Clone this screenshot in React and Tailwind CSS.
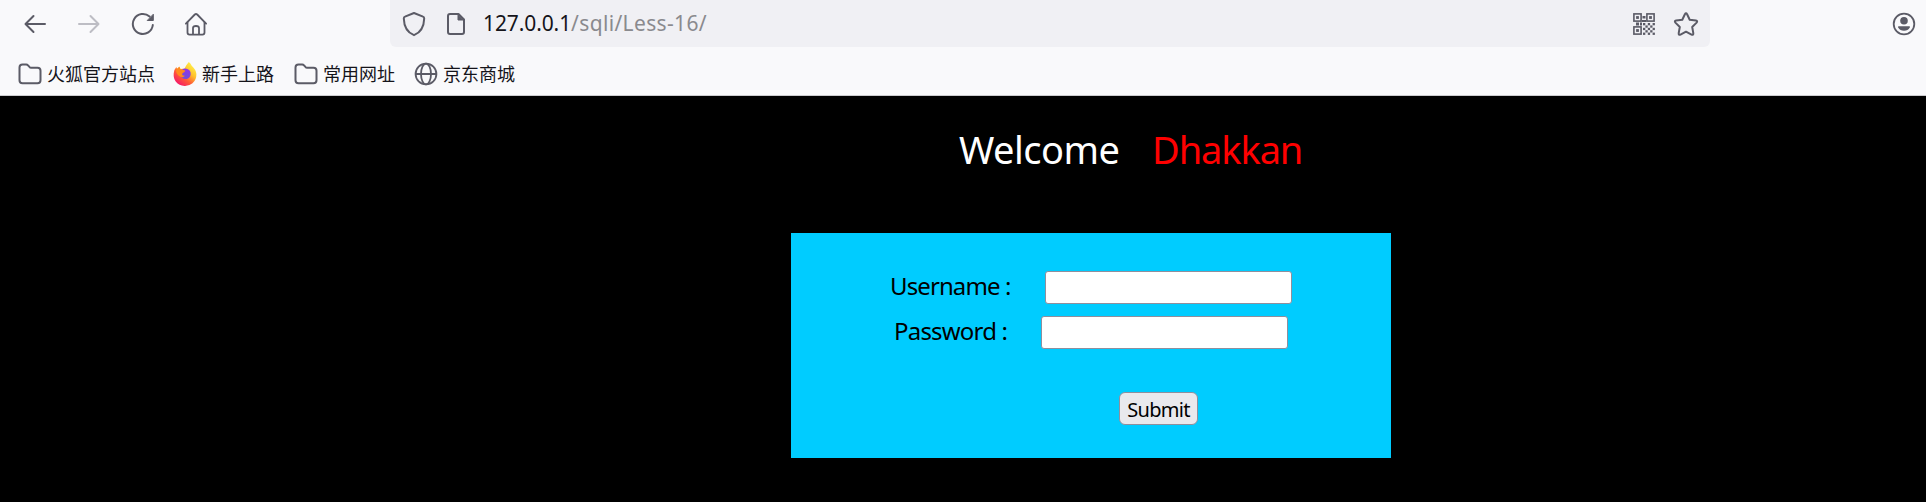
import React from "react";

const stroke = {
  fill: "none",
  stroke: "currentColor",
  strokeWidth: 2,
  strokeLinecap: "round",
  strokeLinejoin: "round",
};

function Back({ className }) {
  return (
    <svg className={className} width="24" height="24" viewBox="0 0 24 24" {...stroke}>
      <path d="M22 12H2.6M10.5 4L2.5 12l8 8" />
    </svg>
  );
}

function Reload() {
  return (
    <svg width="24" height="24" viewBox="0 0 24 24" {...stroke}>
      <path d="M21.8 13A10 10 0 1 1 18.6 4.6" />
      <path d="M22.3 2.6V8.5H16.6z" fill="currentColor" strokeWidth="1" />
    </svg>
  );
}

function Home() {
  return (
    <svg width="24" height="24" viewBox="0 0 24 24" {...stroke} strokeWidth="1.8">
      <path d="M1.9 11.7L10.8 2.5Q12 1.4 13.2 2.5L22.1 11.7" />
      <path d="M3.5 10.3V20.6Q3.5 22.6 5.5 22.6H18.5Q20.5 22.6 20.5 20.6V10.3" />
      <path d="M9 22V16Q9 14 12 14T15 16V22" />
    </svg>
  );
}

function Shield() {
  return (
    <svg width="24" height="26" viewBox="0 0 24 26" {...stroke}>
      <path d="M12 2L21 5.6Q22.2 6 22.2 7.4C22 15.5 19.5 21 12 24.2C4.5 21 2 15.5 1.8 7.4Q1.8 6 3 5.6Z" />
    </svg>
  );
}

function Page() {
  return (
    <svg width="20" height="24" viewBox="0 0 20 24" {...stroke}>
      <path d="M4 2H12.5L18 7.5V20Q18 22 16 22H4Q2 22 2 20V4Q2 2 4 2Z" />
      <path d="M12 2.5V8H17.5z" fill="currentColor" strokeWidth="1" />
    </svg>
  );
}

function Finder({ x, y }) {
  return (
    <g>
      <rect x={x + 0.9} y={y + 0.9} width="7.2" height="7.2" fill="none" stroke="currentColor" strokeWidth="1.6" />
      <rect x={x + 3.1} y={y + 3.1} width="2.8" height="2.8" />
    </g>
  );
}

const qrDots = [
  [0, 0], [2, 0], [4, 0], [1, 1], [3, 1], [0, 2], [2, 2], [4, 2], [1, 3], [3, 3], [0, 4], [2, 4], [4, 4],
];

function QrCode() {
  return (
    <svg width="22" height="22" viewBox="0 0 22 22" fill="currentColor">
      <Finder x={0} y={0} />
      <Finder x={13} y={0} />
      <Finder x={0} y={13} />
      <path d="M9.500 3h3v2.500h-3zM9 7h4v2H9zM3 9.500h3v3H3zM7 9.500h2v3H7z" />
      {qrDots.map(([c, r]) => (
        <rect key={`${c}-${r}`} x={10 + c * 2.4} y={10 + r * 2.4} width="2.3" height="2.3" />
      ))}
    </svg>
  );
}

function Star() {
  return (
    <svg width="26" height="26" viewBox="0 0 26 26" {...stroke}>
      <path d="M11.9 3.2Q13 1.3 14.1 3.2L16.7 8.7L22.9 9.5Q25 10 23.6 11.6L19.2 16L20.3 22.2Q20.4 24.4 18.5 23.6L13 20.7L7.5 23.6Q5.6 24.4 5.7 22.2L6.8 16L2.4 11.6Q1 10 3.1 9.5L9.3 8.7Z" />
    </svg>
  );
}

function Account() {
  return (
    <svg width="24" height="24" viewBox="0 0 24 24">
      <circle cx="12" cy="12" r="10.3" fill="none" stroke="currentColor" strokeWidth="1.8" />
      <circle cx="12" cy="8.8" r="3.8" fill="currentColor" />
      <path d="M6.8 14.2H17.2Q18.4 14.2 17.8 15.4Q16 18.7 12 18.7T6.2 15.4Q5.6 14.2 6.8 14.2Z" fill="currentColor" />
    </svg>
  );
}

function Folder() {
  return (
    <svg width="24" height="22" viewBox="0 0 24 22" {...stroke}>
      <path d="M4.5 1.5H8.2Q9.3 1.5 10 2.3L11.7 4.2Q12.2 4.7 13 4.7H19.5Q22.5 4.7 22.5 7.7V17.3Q22.5 20.3 19.5 20.3H4.5Q1.5 20.3 1.5 17.3V4.5Q1.5 1.5 4.5 1.5Z" />
    </svg>
  );
}

function Globe() {
  return (
    <svg width="24" height="24" viewBox="0 0 24 24" {...stroke} strokeWidth="1.8">
      <circle cx="12" cy="12" r="10.4" />
      <ellipse cx="12" cy="12" rx="5" ry="10.4" />
      <path d="M1.8 12H22.2" />
    </svg>
  );
}

function Firefox() {
  return (
    <svg width="24" height="26" viewBox="0 0 24 26">
      <defs>
        <linearGradient id="flame" x1="0.85" y1="0.1" x2="0.2" y2="0.95">
          <stop offset="0" stopColor="#fff14a" />
          <stop offset="0.35" stopColor="#ffc02c" />
          <stop offset="0.65" stopColor="#ff5a36" />
          <stop offset="1" stopColor="#f5156c" />
        </linearGradient>
        <linearGradient id="sphere" x1="0.7" y1="0" x2="0.3" y2="1">
          <stop offset="0" stopColor="#9334e8" />
          <stop offset="1" stopColor="#6b50d8" />
        </linearGradient>
      </defs>
      <path d="M15.8 1Q17.5 2 18.7 4.8Q22.9 8.5 23.4 13Q23.5 19 19.5 22.3Q16 25.2 11.5 25Q6 24.7 2.9 20.8Q0.3 17.5 0.7 12.5Q1 8.500 3.300 6L4.200 8L6.300 5.600L7.500 8L11.500 7.600Q13.500 3.500 15.800 1Z" fill="url(#flame)" />
      <path d="M8 11Q8.500 7.800 12.500 7.600Q16.500 8 17.600 11.500Q18.200 15.500 15 17.600Q11.500 19 8.800 16.500Q6.500 14 8 11Z" fill="url(#sphere)" />
      <path d="M3 9.500L4.300 7.600L6.300 6L7.500 8.300L12.300 9.400Q12 11.300 9.800 11.900L9 13.300Q9.500 15 12 14.800Q10.500 17 7.500 15.800Q3.500 14 3 9.500Z" fill="#ff8a1c" />
    </svg>
  );
}

function Bookmark({ icon, label, className }) {
  return (
    <a className={`flex items-center ${className}`}>
      <span className="flex h-[26px] w-6 items-center text-[#5b5b66]">{icon}</span>
      <span className="ml-[5px] text-[18px] leading-6 whitespace-nowrap text-[#15141a]">{label}</span>
    </a>
  );
}

function Browser() {
  return (
    <header className="h-24 border-b border-[#cccccf] bg-[#f9f9fb] text-[#5b5b66]">
      <div className="flex h-[47px] items-center">
        <nav className="flex w-[390px] items-center pl-[23px]">
          <Back />
          <Back className="ml-[30px] -scale-x-100 text-[#bdbdc4]" />
          <span className="ml-[30px]"><Reload /></span>
          <span className="ml-[29px]"><Home /></span>
        </nav>
        <div className="flex h-[47px] w-[1320px] items-center rounded-b-md bg-[#f0f0f4] pr-[11px] pl-3">
          <Shield />
          <span className="ml-5"><Page /></span>
          <span className="ml-[17px] flex-1 pb-0.5 text-[21px] leading-7 tracking-[0.35px] whitespace-nowrap text-[#8a8a8e]">
            <span className="tracking-[-0.1px] text-[#15141a]">127.0.0.1</span>/sqli/Less-16/
          </span>
          <QrCode />
          <span className="ml-[18px]"><Star /></span>
        </div>
        <span className="ml-[182px] pt-px"><Account /></span>
      </div>
      <div className="flex h-12 items-center pt-1.5 pl-[18px]">
        <Bookmark icon={<Folder />} label="火狐官方站点" className="w-[155px]" />
        <Bookmark icon={<Firefox />} label="新手上路" className="w-[121px]" />
        <Bookmark icon={<Folder />} label="常用网址" className="w-[120px]" />
        <Bookmark icon={<Globe />} label="京东商城" className="" />
      </div>
    </header>
  );
}

const field = "rounded-[3px] border border-[#8f8f9d] bg-white outline-none";

export default function App() {
  return (
    <div className="flex h-[502px] w-[1926px] flex-col overflow-hidden bg-black font-['Noto_Sans','Noto_Sans_CJK_SC',sans-serif]">
      <Browser />
      <main className="flex flex-col">
        <h1 className="flex h-[137px] pt-[26px] pl-[959px] text-[38px] leading-[54px] whitespace-nowrap text-white">
          <span className="w-[193px] tracking-[-0.5px]">Welcome</span>
          <span className="tracking-[-1.1px] text-[#ff0000]">Dhakkan</span>
        </h1>
        <form className="ml-[791px] flex h-[225px] w-[600px] flex-col bg-[#00ccff] pt-[38px] text-[24px] text-black">
          <label className="flex h-[33px] items-center pl-[99px]">
            <span className="w-[155px] pb-[3px] tracking-[-0.9px] whitespace-nowrap">Username :</span>
            <input type="text" className={`${field} h-[33px] w-[247px]`} />
          </label>
          <label className="mt-3 flex h-[33px] items-center pl-[103px]">
            <span className="w-[147px] pb-[3px] tracking-[-0.8px] whitespace-nowrap">Password :</span>
            <input type="password" className={`${field} h-[33px] w-[247px]`} />
          </label>
          <button type="button" className="mt-[43px] ml-[328px] flex h-[33px] w-[79px] items-center justify-center rounded-md border border-[#8f8f9d] bg-[#e9e9ed] pt-0.5 text-[20px] tracking-[-0.7px]">
            Submit
          </button>
        </form>
      </main>
    </div>
  );
}
